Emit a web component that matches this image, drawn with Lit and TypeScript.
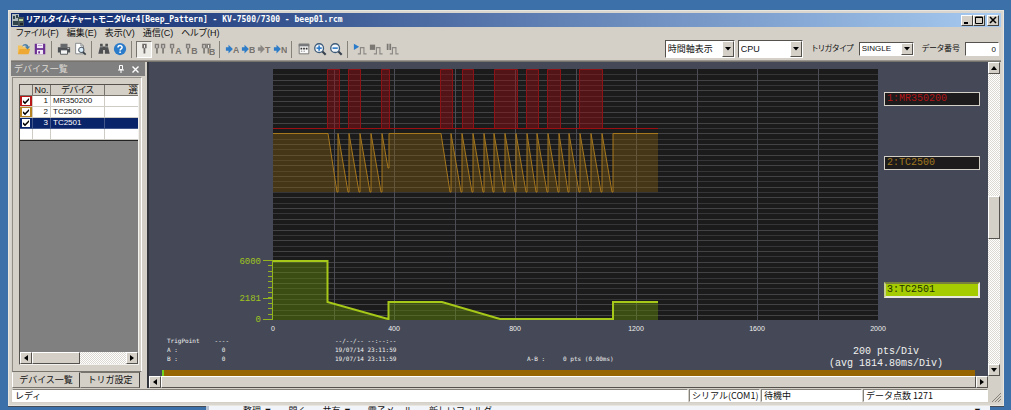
import { LitElement, html, svg, css, nothing, TemplateResult } from "lit";
import { customElement, property } from "lit/decorators.js";
import { classMap } from "lit/directives/class-map.js";

type Pt = [number, number];

// ---------- icons ----------
const probe = (x: number, c = "#807c78") => svg`
  <path d="M${x} 2h5v5h-1.5v6h-2v-6h-1.5z" fill=${c}/><path d="M${x + 2} 3.5h1v3h-1z" fill="#fff"/>`;
const letter = (t: string, x: number, y: number, fill = "#77736e") => svg`
  <text x=${x} y=${y} font-size="10" font-weight="700" fill=${fill} font-family="Liberation Sans, sans-serif">${t}</text>`;
const jump = (t: string, c = "#2f7cc8") => svg`
  <path d="M1 6h3V3l5 5-5 5v-3H1z" fill=${c}/>${letter(t, 9, 12)}`;
const pulse = svg`<path d="M5.5 13.500h3v-7h4v7h3" fill="none" stroke="#8c8985" stroke-width="1.300"/>`;
const lens = (plus: boolean) => svg`
  <path d="M10.500 10.500l4 4" stroke="#39434e" stroke-width="2.400"/>
  <circle cx="7" cy="7" r="5" fill="#f2f6fa" stroke="#3d5a78" stroke-width="1.500"/>
  <path d="M4 7h6" stroke="#2878c8" stroke-width="1.800"/>
  ${plus ? svg`<path d="M7 4v6" stroke="#2878c8" stroke-width="1.800"/>` : nothing}`;

const icons: Record<string, TemplateResult> = {
  open: svg`<path d="M1 4h5l1 2h7v7H1z" fill="#f4c25c"/><path d="M3 8h12l-2 6H1z" fill="#eda934"/>
    <path d="M6 5c1-3.500 6-3.500 7 0h2l-3 3.500L9 5h2c-1-1.500-3-1.500-5 0z" fill="#4a7fa8"/>`,
  save: svg`<path d="M2 2h12v12H2z" fill="#6b2e91"/><path d="M4.500 2h7v5h-7z" fill="#f1e8f6"/>
    <path d="M4.500 9h7v5h-7z" fill="#f1e8f6"/><path d="M6 10.500h2v2.500H6z" fill="#6b2e91"/><path d="M5.500 4h5" stroke="#b48cc8"/>`,
  print: svg`<path d="M4 2h8v4H4z" fill="#66696c"/><path d="M1 6h14v6H1z" fill="#4c5054"/>
    <path d="M4 9h8v5H4z" fill="#f4f4f4" stroke="#4c5054"/><path d="M12 7.500h2" stroke="#d8d8d8"/>`,
  preview: svg`<path d="M3 1.500h6l3 3v9H3z" fill="#fff" stroke="#7d8083"/><path d="M9 1.500v3h3" fill="none" stroke="#7d8083"/>
    <circle cx="9.500" cy="9" r="3" fill="#d9ecf8" stroke="#55606a" stroke-width="1.200"/><path d="M11.500 11.500l3 3" stroke="#3a4248" stroke-width="2"/>`,
  find: svg`<path d="M3.500 2h3v3h3V2h3v3l2 8.500h-5.500V9h-2v4.500H1.500L3.500 5z" fill="#4e5052"/><path d="M3.500 5.500h3M9.500 5.500h3" stroke="#a8a8a8"/>`,
  help: svg`<circle cx="8" cy="8" r="7" fill="#2a7bc9"/><path d="M5.700 6.400C5.700 3.200 10.400 3.400 10.400 6.200c0 1.700-2.300 1.700-2.300 3.500" fill="none" stroke="#fff" stroke-width="1.700"/><path d="M7.200 10.800h1.800v1.700H7.200z" fill="#fff"/>`,
  p1: svg`${probe(6, "#6e6b68")}`,
  p2: svg`${probe(2)}${probe(9)}`,
  pa: svg`${probe(1)}${letter("A", 7, 14)}`,
  pb: svg`${probe(1)}${letter("B", 7, 14)}`,
  pab: svg`${probe(1)}${probe(6)}${letter("B", 9, 15)}`,
  ja: jump("A"),
  jb: jump("B"),
  jt: jump("T", "#8a8784"),
  jn: jump("N"),
  cal: svg`<path d="M2.500 2.500h11v11h-11z" fill="#fafafa" stroke="#6c6a68"/><path d="M2 2h12v3H2z" fill="#77797b"/>
    <path d="M4 7.500h2M7 7.500h2M10 7.500h2" stroke="#333" stroke-width="2"/><path d="M4.500 10.500h1.500M7.500 10.500h1.500" stroke="#777"/>`,
  zin: lens(true),
  zout: lens(false),
  play: svg`${pulse}<path d="M1 2l6 3.500L1 9z" fill="#2a7bc9"/>`,
  stop: svg`${pulse}<path d="M1 3h6v6H1z" fill="#7b7874"/>`,
  pause: svg`${pulse}<path d="M2 2h2v7H2zM5 2h2v7H5z" fill="#7b7874"/>`,
};

const toolGroups: [string, string][][] = [
  [["open", "開く"], ["save", "保存"]],
  [["print", "印刷"], ["preview", "印刷プレビュー"]],
  [["find", "検索"], ["help", "ヘルプ"]],
  [["p1", "カーソル"], ["p2", "両カーソル"], ["pa", "カーソルA"], ["pb", "カーソルB"], ["pab", "カーソルAB"]],
  [["ja", "Aへ移動"], ["jb", "Bへ移動"], ["jt", "トリガへ移動"], ["jn", "番号へ移動"]],
  [["cal", "日時"], ["zin", "拡大"], ["zout", "縮小"]],
  [["play", "開始"], ["stop", "停止"], ["pause", "一時停止"]],
];

// ---------- trace data (x: 0..605, y: 0..251) ----------
const END = 385;
const pulses: Pt[] = [[54, 66], [75, 87], [108, 116], [167, 179], [189, 200], [221, 244], [253, 265], [274, 287], [306, 329]];

const ramp = (xs: number[], top: number, bottom: number): Pt[] =>
  xs.slice(0, -1).flatMap((x, i): Pt[] => [[x, top], [xs[i + 1] - 1, bottom], [xs[i + 1], bottom]]);

const counter: Pt[] = [
  [0, 64.5],
  ...ramp([55, 65, 76, 87, 98, 109], 64.5, 123),
  [109, 64.5], [115, 99], [116, 99], [116, 64.5],
  ...ramp([168, 178, 189, 200, 211, 221, 232, 243, 254, 264, 275, 286, 296, 307, 318, 329, 340], 64.5, 123),
  [340, 64.5], [END, 64.5],
];
const beep: Pt[] = [[0, 192], [54.5, 192], [54.5, 233], [115, 250], [115.500, 250], [115.500, 233], [169, 233], [227, 250], [340, 250], [340, 233], [END, 233]];

const pts = (p: Pt[]) => p.map((q) => q.join(",")).join(" ");
const area = (p: Pt[], base: number) => pts([[0, base], ...p, [END, base]]);

const base = css`
  :host { display: block; box-sizing: border-box; }
  *, *::before, *::after { box-sizing: border-box; }
  button, select, input { font: inherit; color: inherit; margin: 0; padding: 0; border-radius: 0; }
  button { background: #d4d0c8; }
  svg { display: block; }
`;

@customElement("classic-scrollbar")
class ClassicScrollbar extends LitElement {
  @property({ type: Boolean, reflect: true }) vertical = false;
  @property({ type: Number }) before = 0;
  @property({ type: Number }) size = 100;
  static styles = [base, css`
    :host { display: flex; height: 12px; background: repeating-conic-gradient(#fff 0 25%, #dcd9d2 0 50%) 0 0 / 2px 2px; }
    :host([vertical]) { flex-direction: column; width: 12px; height: auto; }
    button { flex: 0 0 12px; display: grid; place-items: center; border: 1px solid; border-color: #fff #55524e #55524e #fff; min-width: 0; }
    .track { flex: 1; display: flex; min-height: 0; }
    :host([vertical]) .track { flex-direction: column; }
    .thumb { background: #d4d0c8; border: 1px solid; border-color: #fff #55524e #55524e #fff; flex: none; }
  `];
  render() {
    const [a, b] = this.vertical ? ["M0 5l3-4 3 4z", "M0 1l3 4 3-4z"] : ["M5 0L1 3l4 3z", "M1 0l4 3-4 3z"];
    const dim = this.vertical ? "height" : "width";
    const arrow = (d: string) => html`<svg width="6" height="6" viewBox="0 0 6 6"><path d=${d} /></svg>`;
    return html`<button aria-label="戻る">${arrow(a)}</button>
      <div class="track">
        <div style="${dim}:${this.before}%"></div>
        <div class="thumb" style="${dim}:${this.size}%"></div>
      </div>
      <button aria-label="進む">${arrow(b)}</button>`;
  }
}

@customElement("tool-bar")
class ToolBar extends LitElement {
  static styles = [base, css`
    :host { display: flex; align-items: center; justify-content: space-between; height: 22px; padding: 0 2px 1px 5px; border-bottom: 1px solid #9a968f; }
    .group, .fields { display: flex; align-items: center; }
    .group + .group { margin-left: 3px; padding-left: 4px; border-left: 1px solid #85827c; }
    .tools { display: flex; }
    .tool { width: 16px; height: 17px; border: 0; display: grid; place-items: center; }
    .tool.on { border: 1px solid; border-color: #77736d #fff #fff #77736d; background: #edebe6; }
    .tool svg { width: 14px; height: 14px; }
    .combo { display: grid; grid-template-columns: 1fr 12px; background: #fff; border: 1px solid; border-color: #55524e #fff #fff #55524e; height: 18px; font-size: 9px; }
    .combo.low { height: 14px; width: 55px; font-size: 8px; }
    .axis { width: 70px; }
    .unit { width: 65px; margin: 0 4px 0 3px; }
    select { appearance: none; grid-area: 1 / 1 / 2 / 3; border: 0; background: none; padding-left: 2px; min-width: 0; height: 100%; }
    .arrow { grid-area: 1 / 2; pointer-events: none; display: grid; place-items: center; background: #d4d0c8; border: 1px solid; border-color: #fff #55524e #55524e #fff; }
    label { font-size: 8px; margin: 0 5px; font-feature-settings: "palt"; }
    .low + label { margin-left: 8px; }
    input { width: 34px; height: 14px; font-size: 8px; text-align: right; padding-right: 2px; background: #fff; border: 1px solid; border-color: #55524e #fff #fff #55524e; }
  `];
  combo(id: string, cls: string, value: string, label?: string) {
    return html`<div class="combo ${cls}">
      <select id=${id} aria-label=${label ?? nothing}><option>${value}</option></select>
      <span class="arrow"><svg width="6" height="4" viewBox="0 0 6 4"><path d="M0 0h6L3 3.500z" /></svg></span>
    </div>`;
  }
  render() {
    return html`
      <div class="tools">${toolGroups.map((g) => html`<div class="group">${g.map(([k, name]) => html`
        <button class=${classMap({ tool: true, on: k === "p1" })} aria-label=${name}><svg viewBox="0 0 16 16">${icons[k]}</svg></button>`)}</div>`)}
      </div>
      <div class="fields">
        ${this.combo("axis", "axis", "時間軸表示", "表示軸")}
        ${this.combo("unit", "unit", "CPU", "ユニット")}
        <label for="trig">トリガタイプ</label>
        ${this.combo("trig", "low", "SINGLE")}
        <label for="num">データ番号</label>
        <input id="num" type="text" value="0" />
      </div>`;
  }
}

@customElement("device-panel")
class DevicePanel extends LitElement {
  static styles = [base, css`
    :host { display: flex; flex-direction: column; width: 136px; min-height: 0; font-size: 9px; }
    header { display: flex; align-items: center; height: 14px; margin-right: 2px; padding: 0 3px; background: #808080; color: #dedbd5; }
    header span { flex: 1; }
    header button { border: 0; background: none; width: 14px; display: grid; place-items: center; }
    .frame { flex: 1; min-height: 0; margin: 1px 5px 0 1px; padding: 6px 0 6px 6px; border: 1px solid; border-color: #908d87 #fff #77736d #908d87; display: flex; flex-direction: column; }
    .list { flex: 1; min-height: 0; margin-right: 2px; border: 1px solid; border-color: #55524e #f4f2ee #f4f2ee #55524e; background: #808080; display: flex; flex-direction: column; overflow: hidden; }
    .rows { flex: 1; min-height: 0; overflow: hidden; }
    table { table-layout: fixed; width: 151px; border-collapse: separate; border-spacing: 0; font-size: 8px; line-height: 10px; background: #fff; border-bottom: 1px solid #222; }
    th, td { height: 11px; padding: 0; border: 0 solid #cfccc6; border-width: 0 1px 1px 0; overflow: hidden; white-space: nowrap; font-weight: 400; }
    th { background: #d4d0c8; border-color: #77736d; height: 11px; font-size: 9px; font-feature-settings: "palt"; }
    .n { text-align: right; padding-right: 2px; }
    .d { padding-left: 2px; }
    .red { background: #b81818; }
    .amber { background: #b58322; }
    .sel td { background: #0a246a; color: #fff; border-color: #42588c; }
    input { appearance: none; display: block; width: 8px; height: 8px; margin: 1px auto; background: #fff; }
    input:checked::before { content: ""; display: block; width: 8px; height: 8px; background: #000; clip-path: polygon(12% 40%, 38% 62%, 88% 12%, 88% 38%, 38% 90%, 12% 66%); }
    .tabs { display: flex; height: 16px; padding-left: 1px; }
    .tabs button { border: 1px solid; border-color: #77736d #44423e #77736d #d4d0c8; width: 60px; height: 16px; line-height: 14px; }
    .tabs .cur { width: 68px; border-color: #d4d0c8 #44423e #77736d #fff; }
  `];
  render() {
    const rows: [string, string][] = [["MR350200", "red"], ["TC2500", "amber"], ["TC2501", "sel"]];
    return html`
      <header><span>デバイス一覧</span>
        <button aria-label="固定"><svg width="6" height="8" viewBox="0 0 6 8"><path d="M1.500 .5h3v4h-3zM0 5h6M3 5v3" fill="none" stroke="#fff"/></svg></button>
        <button aria-label="閉じる"><svg width="7" height="7" viewBox="0 0 7 7"><path d="M.5.5l6 6M6.500.5l-6 6" stroke="#fff" stroke-width="1.400"/></svg></button>
      </header>
      <div class="frame"><div class="list">
        <div class="rows"><table>
          <colgroup><col width="13" /><col width="18" /><col width="54" /><col width="66" /></colgroup>
          <thead><tr><th></th><th>No.</th><th>デバイス</th><th>選択</th></tr></thead>
          <tbody>
            ${rows.map(([name, c], i) => html`<tr class=${c === "sel" ? "sel" : ""}>
              <td class=${c}><input type="checkbox" checked aria-label=${name} /></td>
              <td class="n">${i + 1}</td><td class="d">${name}</td><td></td></tr>`)}
            <tr><td></td><td></td><td></td><td></td></tr>
          </tbody>
        </table></div>
        <classic-scrollbar .before=${0} .size=${51}></classic-scrollbar>
      </div></div>
      <div class="tabs" role="tablist">
        <button class="cur" role="tab" aria-selected="true">デバイス一覧</button>
        <button role="tab" aria-selected="false">トリガ設定</button>
      </div>`;
  }
}

@customElement("chart-view")
class ChartView extends LitElement {
  static styles = [base, css`
    :host { display: flex; flex-direction: column; background: #454957; color: #f0f0f0; padding-top: 7px; overflow: hidden; min-width: 0; font-family: "Liberation Mono", monospace; }
    .area { display: grid; grid-template-columns: 124px minmax(0, 1fr) 110px; height: 251px; flex: none; }
    .plot { width: 100%; height: 251px; background: #1b1b1c; }
    .plot * { vector-effect: non-scaling-stroke; }
    .scale { width: 124px; height: 251px; font-size: 9px; fill: #a0c41e; text-anchor: end; overflow: visible; }
    .names { display: grid; grid-template-rows: 59px 5px 59px 68px 59px; align-items: center; padding: 0 8px 0 6px; font-size: 10px; line-height: 12px; }
    .name { border: 1px solid #d4d0c8; background: #1d1b1b; height: 14px; line-height: 12px; padding-left: 2px; text-align: left; font-family: inherit; }
    .r { grid-row: 1; color: #b01418; }
    .a { grid-row: 3; color: #a07820; }
    .g { grid-row: 5; color: #223000; background: #a4cc00; border-width: 2px; border-color: #77803c #e8e8e0 #e8e8e0 #c8d088; height: 16px; padding-left: 1px; }
    .ticks { display: flex; justify-content: space-between; margin: 5px 95px 0 109px; font: 7px/8px "Liberation Sans", sans-serif; flex: none; }
    .ticks span { width: 30px; text-align: center; }
    .info { display: grid; grid-template-columns: 44px 124px 192px minmax(0, 1fr) 160px; padding: 3px 22px 0 18px; font: 6px/9px "DejaVu Sans Mono", monospace; white-space: pre; }
    .div { font: 10px/12px "Liberation Mono", monospace; text-align: center; padding-top: 10px; }
    .strip { height: 7px; margin: auto 13px 0 13px; background: #966400; border-left: 2px solid #6ed21e; flex: none; }
  `];
  render() {
    const rows = Array.from({ length: 46 }, (_, i) => Math.round((i + 1) * 5.35) + 0.5);
    const cols = Array.from({ length: 9 }, (_, i) => Math.round((i + 1) * 60.5) + 0.5);
    const minor = Array.from({ length: 12 }, (_, i) => Math.round(192 + i * 5.35) - 0.5);
    return html`
      <div class="area">
        <svg class="scale" viewBox="0 0 124 251">
          <text x="112" y="195">6000</text><text x="112" y="232">2181</text><text x="112" y="253">0</text>
          <path d="M114 191.500h10M114 229.500h10M114 250.500h10M123.500 191v60" stroke="#93b41c" fill="none"/>
          ${minor.map((y) => svg`<path d="M119 ${y}h5" stroke="#93b41c"/>`)}
        </svg>
        <svg class="plot" viewBox="0 0 605 251" preserveAspectRatio="none">
          ${rows.map((y, i) => svg`<path d="M0 ${y}h605" stroke=${i % 2 ? "#434345" : "#363638"}/>`)}
          ${cols.map((x) => svg`<path d="M${x} 0v251" stroke="#4b4c54"/>`)}
          ${pulses.map(([a, b]) => svg`<path d="M${a + 0.5} 59V.5H${b + 0.5}V59" fill="#a00c10" fill-opacity=".42" stroke="#8c1216"/>`)}
          <path d="M0 59.500H${END}" stroke="#9c1014"/>
          <polygon points=${area(counter, 123)} fill="#8a6410" fill-opacity=".38"/>
          <polyline points=${pts(counter)} fill="none" stroke="#a8781c"/>
          <polygon points=${area(beep, 251)} fill="#6c9408" fill-opacity=".42"/>
          <polyline points=${pts(beep)} fill="none" stroke="#a6c818" stroke-width="2"/>
        </svg>
        <div class="names">
          <button class="name r">1:MR350200</button>
          <button class="name a">2:TC2500</button>
          <button class="name g">3:TC2501</button>
        </div>
      </div>
      <div class="ticks">${[0, 400, 800, 1200, 1600, 2000].map((v) => html`<span>${v}</span>`)}</div>
      <div class="info">
        <div>TrigPoint<br />A :<br />B :</div>
        <div> ----<br />   0<br />   0</div>
        <div>--/--/-- --:--:--<br />19/07/14 23:11:59<br />19/07/14 23:11:59</div>
        <div><br /><br />A-B :     0 pts (0.00ms)</div>
        <div class="div">200 pts/Div<br />(avg 1814.80ms/Div)</div>
      </div>
      <div class="strip"></div>`;
  }
}

@customElement("app-root")
class AppRoot extends LitElement {
  static styles = [base, css`
    :host { display: flex; flex-direction: column; height: 100vh; padding: 10px 7px 0 8px; background: #3b70a9; overflow: hidden; color: #111; font: 9px/12px "Liberation Sans", "Noto Sans CJK JP", sans-serif; }
    .window { flex: 1; min-height: 0; display: flex; flex-direction: column; background: #d4d0c8; border: 3px solid #d9d6cf; outline: 1px solid #e9e6e0; outline-offset: -1px; box-shadow: 0 1px 0 #444b55; }
    .title { display: flex; align-items: center; height: 14px; flex: none; background: linear-gradient(90deg, #0d276c, #a6caf0); color: #fff; font: 700 8px/14px "DejaVu Sans Mono", "Noto Sans CJK JP", monospace; font-feature-settings: "palt"; }
    .title h1 { flex: 1; font: inherit; font-feature-settings: "palt"; margin: 0 0 0 2px; white-space: nowrap; }
    .title > svg { margin-left: 1px; }
    .title button { width: 12px; height: 11px; border: 1px solid; border-color: #fff #44423e #44423e #fff; display: grid; place-items: center; }
    .title .close { margin: 0 2px; }
    nav { display: flex; gap: 8px; height: 12px; padding: 0 5px; flex: none; font-feature-settings: "palt"; }
    nav button { border: 0; background: none; }
    .body { flex: 1; min-height: 0; display: grid; grid-template-columns: auto minmax(0, 1fr); border-top: 1px solid #77736d; }
    .main { display: grid; grid-template: minmax(0, 1fr) 12px / minmax(0, 1fr) 12px; padding-right: 1px; border-left: 2px solid #33353c; min-height: 0; }
    footer { height: 15px; flex: none; display: grid; grid-template-columns: minmax(0, 1fr) 71px 101px 125px 12px; gap: 1px; padding: 1px 0 1px 1px; }
    footer span { background: #fff; border: 1px solid; border-color: #85827c #fff #fff #85827c; padding-left: 2px; line-height: 11px; font-family: "Noto Sans CJK JP", sans-serif; white-space: nowrap; overflow: hidden; }
    footer .ready { border-left-color: #fff; }
    footer svg { align-self: end; justify-self: end; }
    .behind { flex: none; height: 4px; margin: 0 14px 0 198px; padding: 1px 8px 0 34px; overflow: hidden; display: flex; gap: 16px; background: #f1f4f9; border-left: 3px solid #b8c4d4; line-height: 9px; }
    .behind span:last-child { margin-left: auto; }
  `];
  render() {
    return html`
      <div class="window">
        <div class="title">
          <svg width="12" height="12" viewBox="0 0 12 12"><path d="M0 0h7v12H0z" fill="#aeb8bd"/><path d="M1 2h2v3H1zM4 1h2v3H4zM1 7h5v4H1z" fill="#31444c"/><path d="M6 3h6v9H6z" fill="#46545a"/><path d="M7 5h4v2H7z" fill="#b9d39c"/><path d="M8 9h3v2H8z" fill="#1b2428"/></svg>
          <h1>リアルタイムチャートモニタVer4[Beep_Pattern] - KV-7500/7300 - beep01.rcm</h1>
          <button aria-label="最小化"><svg width="8" height="8" viewBox="0 0 8 8"><path d="M1 6h4v2H1z"/></svg></button>
          <button aria-label="最大化"><svg width="8" height="8" viewBox="0 0 8 8"><path d="M.5 1h7v6.500h-7zM0 1.500h8" fill="none" stroke="#000"/></svg></button>
          <button class="close" aria-label="閉じる"><svg width="8" height="8" viewBox="0 0 8 8"><path d="M1 1l6 6M7 1L1 7" stroke="#000" stroke-width="1.500"/></svg></button>
        </div>
        <nav>${["ファイル(F)", "編集(E)", "表示(V)", "通信(C)", "ヘルプ(H)"].map((m) => html`<button>${m}</button>`)}</nav>
        <tool-bar></tool-bar>
        <div class="body">
          <device-panel></device-panel>
          <div class="main">
            <chart-view></chart-view>
            <classic-scrollbar vertical .before=${42} .size=${15}></classic-scrollbar>
            <classic-scrollbar></classic-scrollbar>
          </div>
        </div>
        <footer>
          <span class="ready">レディ</span><span>シリアル(COM1)</span><span>待機中</span><span>データ点数 1271</span>
          <svg width="9" height="9" viewBox="0 0 9 9"><path d="M0 9l9-9M3 9l6-6M6 9l3-3" stroke="#85827c"/></svg>
        </footer>
      </div>
      <div class="behind"><span>整理 ▼</span><span>開く</span><span>共有 ▼</span><span>電子メール</span><span>新しいフォルダー</span><span>▼</span></div>`;
  }
}
